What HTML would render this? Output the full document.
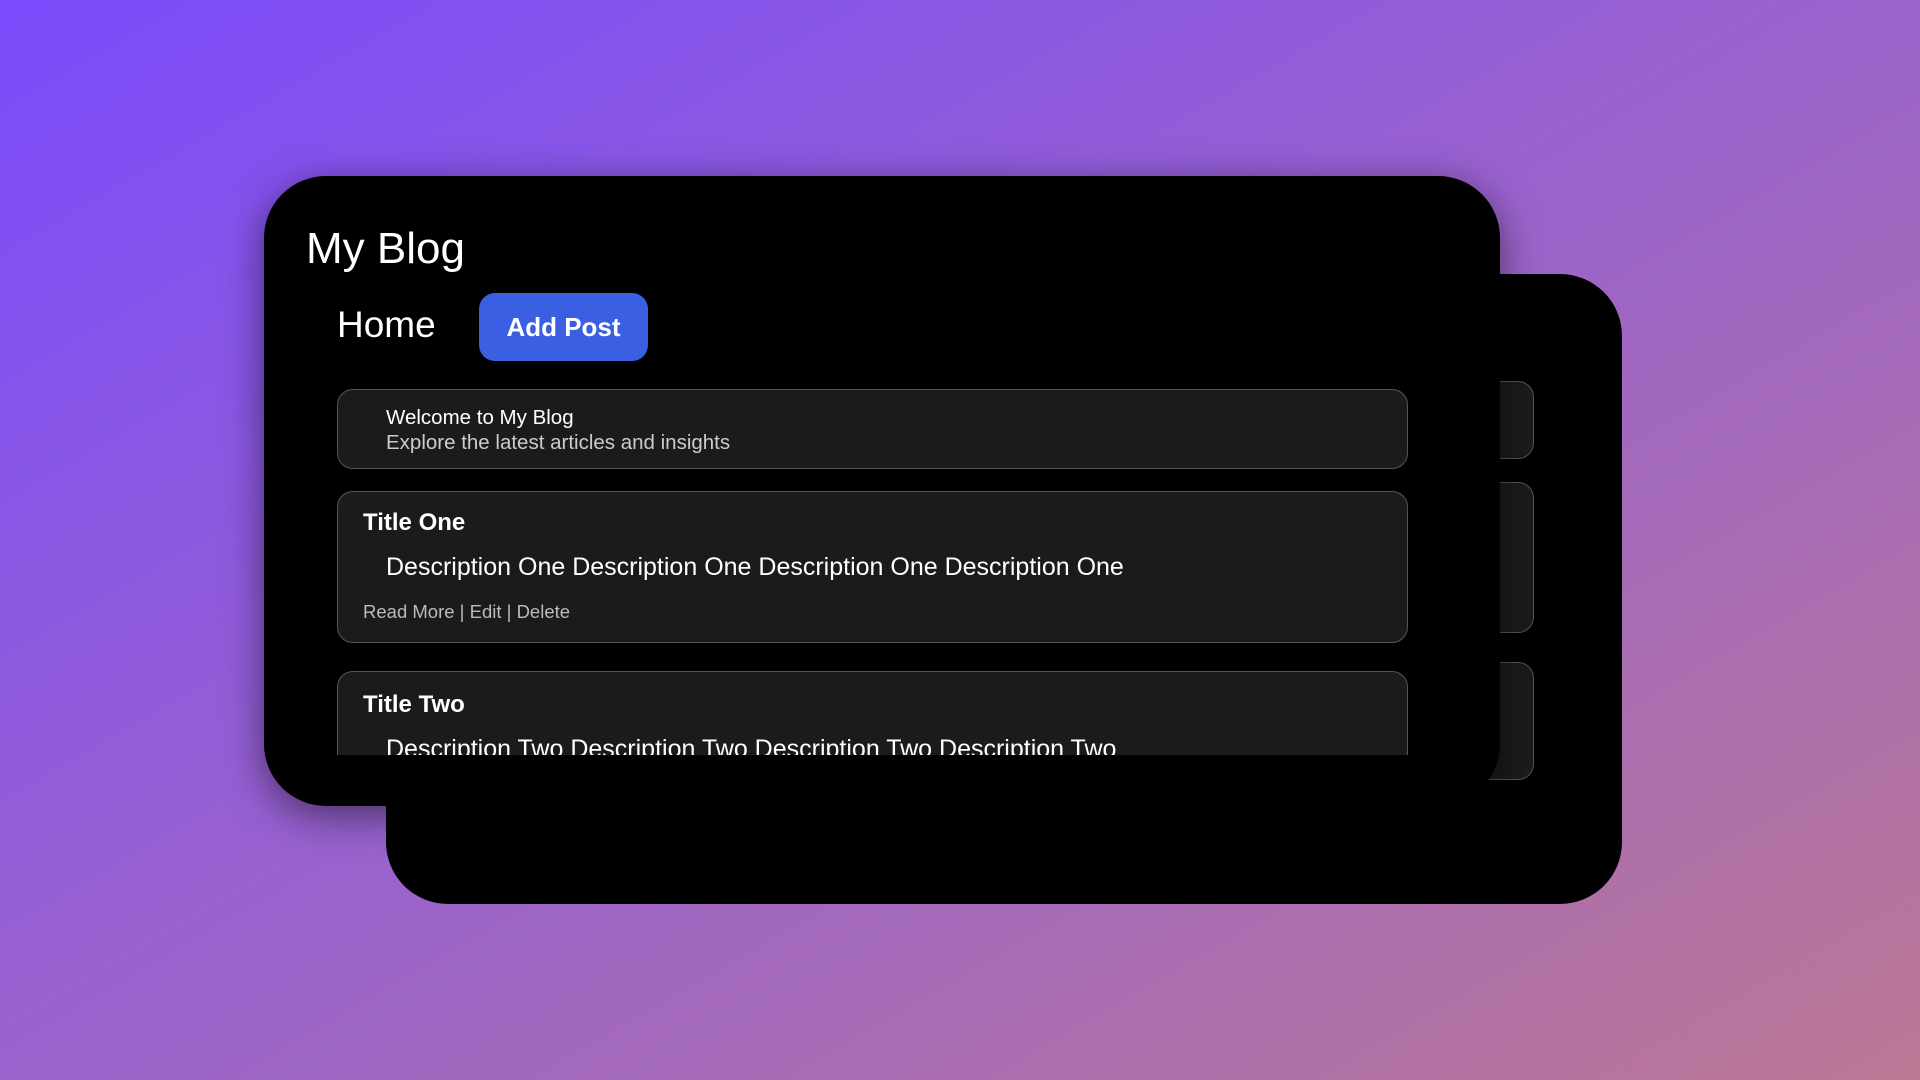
<!DOCTYPE html>
<html><head><style>
*{margin:0;padding:0;box-sizing:border-box}
body{width:1920px;height:1080px;overflow:hidden;font-family:"Liberation Sans",sans-serif;background:linear-gradient(150deg,#7a4bfc 0%,#9a63cc 50%,#bb7894 100%);position:relative}
.card{position:absolute;background:#000;border-radius:62px}
.back{left:386px;top:274px;width:1236px;height:630px}
.front{left:264px;top:176px;width:1236px;height:630px;box-shadow:0 10px 40px rgba(0,0,0,.5)}
.box{position:absolute;background:#1b1b1b;border:1.5px solid #555;border-radius:16px}
.t{position:absolute;color:#fff;white-space:nowrap}
</style></head><body>
<div class="card back">
 <div class="box" style="left:1000px;top:107px;width:148px;height:78px"></div>
 <div class="box" style="left:1000px;top:208px;width:148px;height:151px"></div>
 <div class="box" style="left:1000px;top:388px;width:148px;height:118px"></div>
</div>
<div class="card front">
 <div class="t" style="left:42px;top:48px;font-size:44px">My Blog</div>
 <div class="t" style="left:73px;top:128px;font-size:37px">Home</div>
 <div style="position:absolute;left:215px;top:117px;width:169px;height:68px;background:#3a5fe3;border-radius:16px;color:#fff;font-weight:bold;font-size:26px;text-align:center;line-height:68px">Add Post</div>
 <div style="position:absolute;left:73px;top:213px;width:1071px;height:366px;overflow:hidden">
  <div class="box" style="left:0;top:0;width:1071px;height:80px">
   <div class="t" style="left:48px;top:16px;font-size:20.5px">Welcome to My Blog</div>
   <div class="t" style="left:48px;top:41px;font-size:20.5px;color:#ccc">Explore the latest articles and insights</div>
  </div>
  <div class="box" style="left:0;top:102px;width:1071px;height:152px">
   <div class="t" style="left:25px;top:17px;font-size:24px;font-weight:bold">Title One</div>
   <div class="t" style="left:48px;top:61px;font-size:25px">Description One Description One Description One Description One</div>
   <div class="t" style="left:25px;top:109px;font-size:18.5px;color:#bbb">Read More | Edit | Delete</div>
  </div>
  <div class="box" style="left:0;top:282px;width:1071px;height:152px">
   <div class="t" style="left:25px;top:19px;font-size:24px;font-weight:bold">Title Two</div>
   <div class="t" style="left:48px;top:63px;font-size:25px">Description Two Description Two Description Two Description Two</div>
  </div>
 </div>
</div>
</body></html>
